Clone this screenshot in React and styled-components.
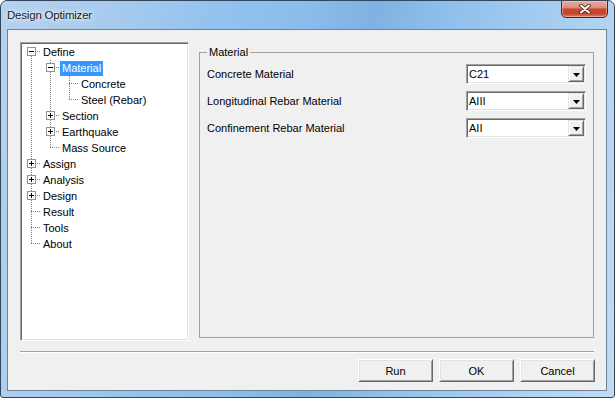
import React from "react";
import styled, { createGlobalStyle } from "styled-components";

const GlobalStyle = createGlobalStyle`
  html, body { margin: 0; padding: 0; background: #fff; }
  body { font-family: "Liberation Sans", Arial, sans-serif; font-size: 11px; color: #000; }
  * { box-sizing: border-box; }
`;

const dotV = "repeating-linear-gradient(to bottom, #808080 0 1px, transparent 1px 2px)";
const dotH = "repeating-linear-gradient(to right, #808080 0 1px, transparent 1px 2px)";

const tree = [
  {
    label: "Define",
    open: true,
    children: [
      {
        label: "Material",
        open: true,
        selected: true,
        children: [{ label: "Concrete" }, { label: "Steel (Rebar)" }],
      },
      { label: "Section", children: [{ label: "x" }] },
      { label: "Earthquake", children: [{ label: "x" }] },
      { label: "Mass Source" },
    ],
  },
  { label: "Assign", children: [{ label: "x" }] },
  { label: "Analysis", children: [{ label: "x" }] },
  { label: "Design", children: [{ label: "x" }] },
  { label: "Result" },
  { label: "Tools" },
  { label: "About" },
];

const flatten = (nodes, depth = 0, guides = [], out = []) => {
  nodes.forEach((n, i) => {
    const last = i === nodes.length - 1;
    out.push({ ...n, depth, guides, last, first: depth === 0 && i === 0, key: out.length });
    if (n.open && n.children) flatten(n.children, depth + 1, [...guides, !last], out);
  });
  return out;
};

const rows = flatten(tree);

const materials = [
  { label: "Concrete Material", value: "C21" },
  { label: "Longitudinal Rebar Material", value: "AIII" },
  { label: "Confinement Rebar Material", value: "AII" },
];

const Expander = ({ open }) => (
  <ExpanderSvg width="9" height="9" viewBox="0 0 9 9">
    <rect x="0.5" y="0.5" width="8" height="8" fill="#fff" stroke="#919191" />
    <path d="M2 4.5h5" stroke="#000" />
    {!open && <path d="M4.5 2v5" stroke="#000" />}
  </ExpanderSvg>
);

const App = () => {
  return (
    <>
      <GlobalStyle />
      <Window>
        <TitleBar>
          <Title>Design Optimizer</Title>
          <CloseButton>
            <svg width="12" height="10" viewBox="0 0 12 10">
              <path d="M2 1.5l8 7M10 1.5l-8 7" stroke="#4a1a14" strokeWidth="3.6" strokeLinecap="round" />
              <path d="M2 1.5l8 7M10 1.5l-8 7" stroke="#fff" strokeWidth="2" strokeLinecap="round" />
            </svg>
          </CloseButton>
        </TitleBar>
        <Client>
          <TopRow>
            <Tree>
              {rows.map((r) => (
                <TreeRow key={r.key}>
                  {r.guides.map((g, i) => (
                    <Guide key={i} $line={g} />
                  ))}
                  <Connector $top={!r.first} $bottom={!r.last}>
                    {r.children && <Expander open={r.open} />}
                  </Connector>
                  <NodeLabel $selected={r.selected}>{r.label}</NodeLabel>
                </TreeRow>
              ))}
            </Tree>
            <Group>
              <Legend>Material</Legend>
              <FieldGrid>
                {materials.map((m) => (
                  <React.Fragment key={m.label}>
                    <FieldLabel>{m.label}</FieldLabel>
                    <Combo>
                      <ComboText>{m.value}</ComboText>
                      <DropButton>
                        <svg width="7" height="4" viewBox="0 0 7 4">
                          <path d="M0 0h7L3.5 4z" fill="#000" />
                        </svg>
                      </DropButton>
                    </Combo>
                  </React.Fragment>
                ))}
              </FieldGrid>
            </Group>
          </TopRow>
          <Separator />
          <ButtonRow>
            <Button>Run</Button>
            <Button>OK</Button>
            <Button>Cancel</Button>
          </ButtonRow>
        </Client>
      </Window>
    </>
  );
};

export default App;

const Window = styled.div`
  width: 615px;
  height: 398px;
  display: flex;
  flex-direction: column;
  border: 1px solid #34465a;
  border-radius: 7px 7px 3px 3px;
  overflow: hidden;
  background: linear-gradient(
    100deg,
    #b6d2ee 0%,
    #a6caee 18%,
    #93c2ef 32%,
    #8abdec 45%,
    #7fb2e2 55%,
    #8fc0ec 66%,
    #a2caef 78%,
    #b4d4f1 90%,
    #c2dbf3 100%
  );
`;

const TitleBar = styled.div`
  height: 28px;
  flex: none;
  display: flex;
  justify-content: space-between;
  align-items: flex-start;
  padding-left: 6px;
`;

const Title = styled.div`
  font-family: "Liberation Sans", Arial, sans-serif;
  font-size: 11.5px;
  letter-spacing: -0.2px;
  color: #1b1b1b;
  margin-top: 8px;
  text-shadow: 0 0 6px rgba(255, 255, 255, 0.9), 0 0 3px rgba(255, 255, 255, 0.9);
`;

const CloseButton = styled.div`
  width: 47px;
  height: 18px;
  margin-top: -1px;
  margin-right: 6px;
  display: flex;
  align-items: center;
  justify-content: center;
  border: 1px solid #5e2119;
  border-radius: 0 0 5px 5px;
  background: linear-gradient(
    to bottom,
    #e8ad9f 0%,
    #dc8f7c 40%,
    #c8462e 52%,
    #c5442c 78%,
    #dc7e64 100%
  );
  box-shadow: inset 0 0 0 1px rgba(255, 210, 200, 0.45);
`;

const Client = styled.div`
  flex: 1;
  margin: 0 7px 6px 6px;
  border: 1px solid #6f8398;
  background: #f0f0f0;
  padding: 12px 12px 0 12px;
  display: flex;
  flex-direction: column;
`;

const TopRow = styled.div`
  display: flex;
  align-items: flex-start;
  gap: 10px;
`;

const Tree = styled.div`
  width: 169px;
  height: 299px;
  flex: none;
  background: #fff;
  border: 1px solid;
  border-color: #a0a0a0 #fff #fff #a0a0a0;
  box-shadow: inset 1px 1px 0 #696969, inset -1px -1px 0 #e3e3e3;
  padding: 1px;
  overflow: hidden;
`;

const TreeRow = styled.div`
  height: 16px;
  display: flex;
  align-items: flex-start;
  white-space: nowrap;
`;

const Guide = styled.div`
  width: 19px;
  height: 16px;
  flex: none;
  background: ${(p) => (p.$line ? `${dotV} 9px 0 / 1px 16px no-repeat` : "none")};
`;

const Connector = styled.div`
  width: 19px;
  height: 16px;
  flex: none;
  background: ${(p) =>
    [
      `${dotH} 9px 7px / 10px 1px no-repeat`,
      p.$top ? `${dotV} 9px 0 / 1px 8px no-repeat` : null,
      p.$bottom ? `${dotV} 9px 8px / 1px 8px no-repeat` : null,
    ]
      .filter(Boolean)
      .join(", ")};
`;

const ExpanderSvg = styled.svg`
  display: block;
  margin: 3px 0 0 5px;
`;

const NodeLabel = styled.span`
  margin: 1px 0 0 0;
  height: 15px;
  line-height: 15px;
  padding: 0 2px;
  background: ${(p) => (p.$selected ? "#3399ff" : "transparent")};
  color: ${(p) => (p.$selected ? "#fff" : "#000")};
`;

const Group = styled.fieldset`
  flex: 1;
  min-width: 0;
  height: 292px;
  margin: 4px 0 0 0;
  padding: 5px 7px 0 7px;
  border: 1px solid #a0a0a0;
`;

const Legend = styled.legend`
  padding: 0 2px;
  font-size: 11px;
  line-height: 13px;
`;

const FieldGrid = styled.div`
  display: grid;
  grid-template-columns: 1fr 120px;
  row-gap: 7px;
  align-items: center;
`;

const FieldLabel = styled.div`
  font-size: 11px;
`;

const Combo = styled.div`
  height: 20px;
  display: flex;
  align-items: center;
  justify-content: space-between;
  background: #fff;
  border: 1px solid;
  border-color: #a0a0a0 #fff #fff #a0a0a0;
  box-shadow: inset 1px 1px 0 #696969, inset -1px -1px 0 #e3e3e3;
  padding: 0 1px 0 1px;
`;

const ComboText = styled.span`
  padding-left: 1px;
  font-size: 11px;
`;

const DropButton = styled.div`
  width: 16px;
  height: 16px;
  display: flex;
  align-items: center;
  justify-content: center;
  padding-top: 1px;
  background: #f0f0f0;
  border: 1px solid;
  border-color: #e3e3e3 #696969 #696969 #e3e3e3;
  box-shadow: inset 1px 1px 0 #fff, inset -1px -1px 0 #a0a0a0;
`;

const Separator = styled.div`
  margin-top: 10px;
  height: 2px;
  border-top: 1px solid #a0a0a0;
  border-bottom: 1px solid #fff;
`;

const ButtonRow = styled.div`
  margin-top: 6px;
  margin-right: -1px;
  display: flex;
  justify-content: flex-end;
  gap: 6px;
`;

const Button = styled.div`
  width: 75px;
  height: 23px;
  display: flex;
  align-items: center;
  justify-content: center;
  font-size: 11px;
  background: #f0f0f0;
  border: 1px solid;
  border-color: #fff #696969 #696969 #fff;
  box-shadow: inset 1px 1px 0 #e3e3e3, inset -1px -1px 0 #a0a0a0;
`;
